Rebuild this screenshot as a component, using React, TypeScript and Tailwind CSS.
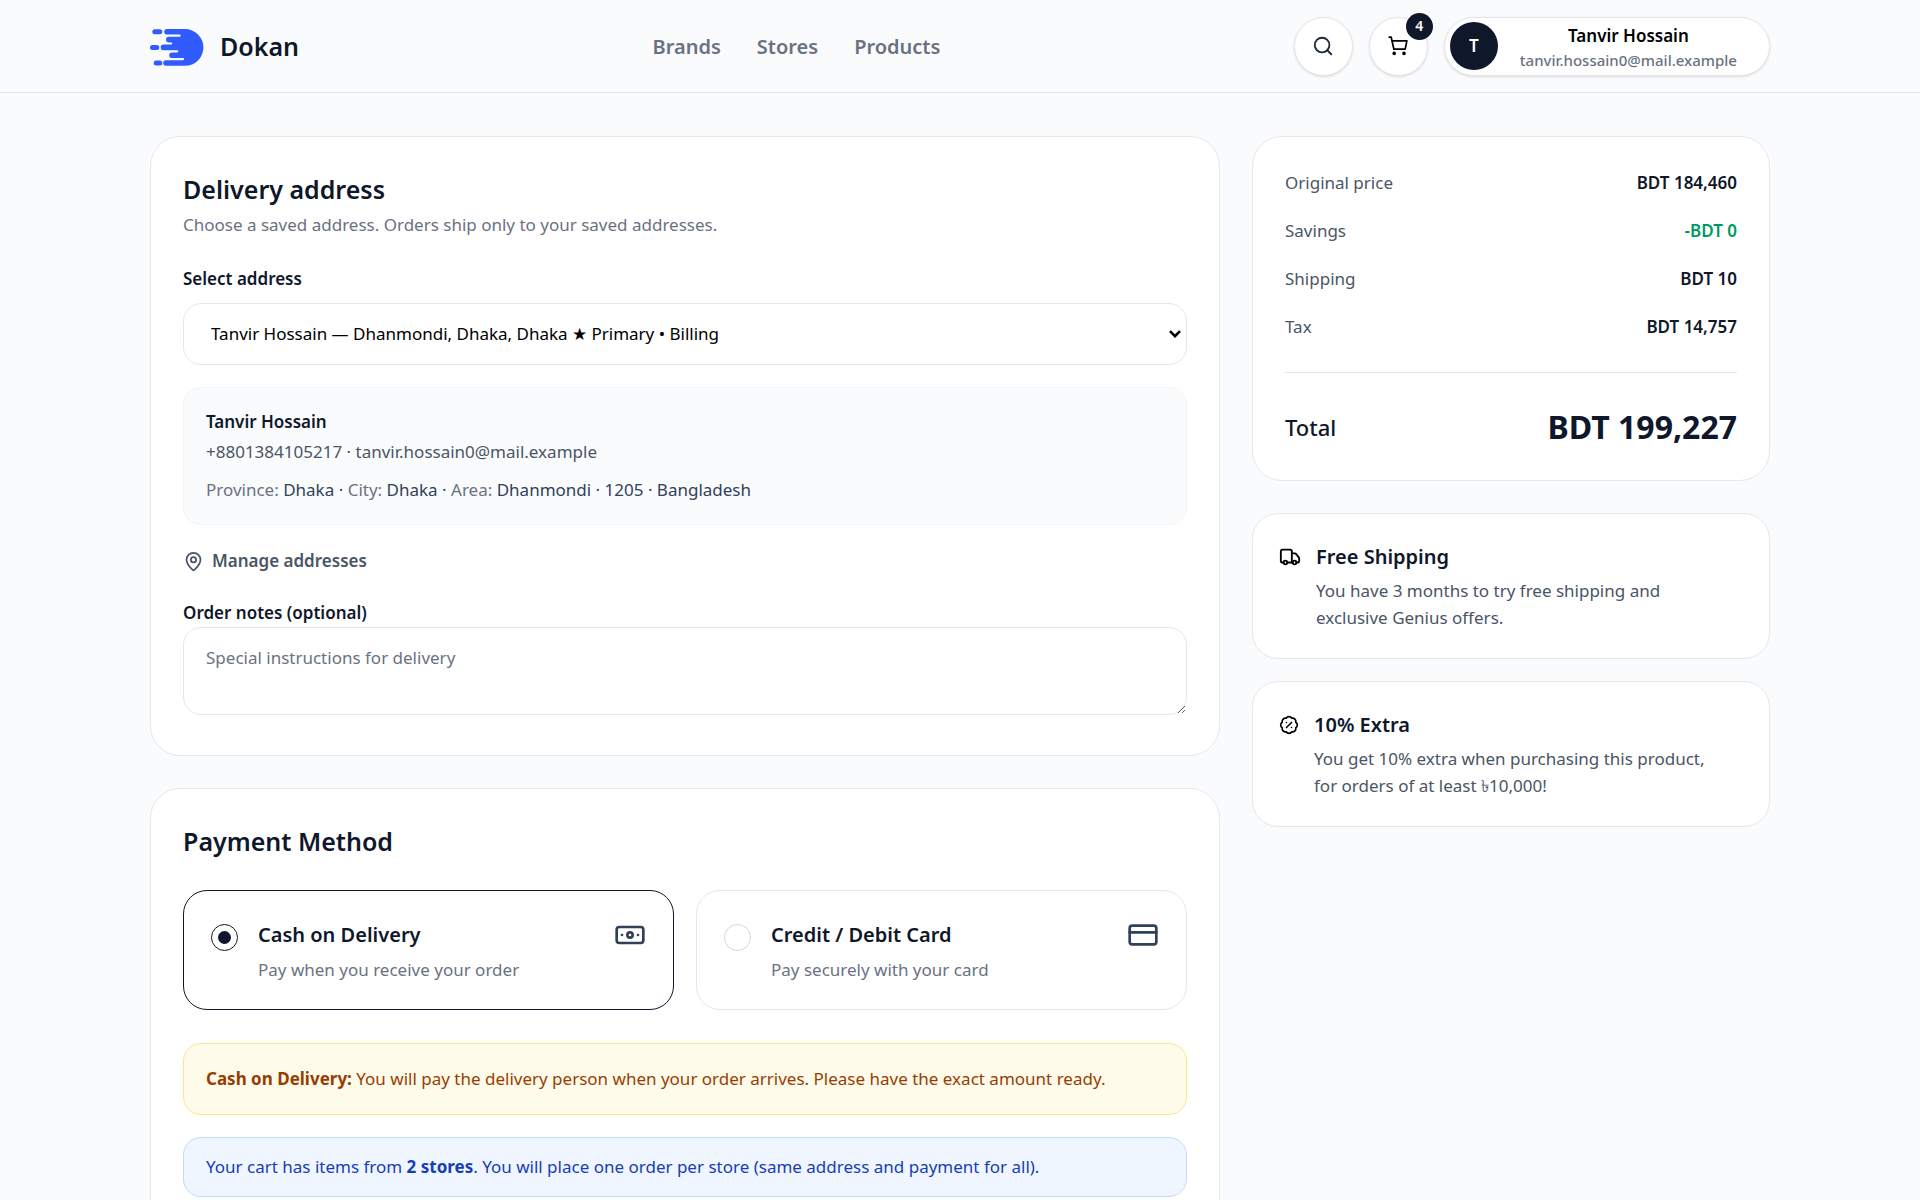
import { useState } from 'react'
import type { ReactNode } from 'react'
import { BadgePercent, Banknote, CreditCard, MapPin, Search, Truck } from 'lucide-react'

interface PaymentOption {
  id: string
  name: string
  desc: string
  icon: ReactNode
}

const NAV = ['Brands', 'Stores', 'Products']

const PAYMENT_OPTIONS: PaymentOption[] = [
  { id: 'cod', name: 'Cash on Delivery', desc: 'Pay when you receive your order', icon: <Banknote size={32} /> },
  { id: 'card', name: 'Credit / Debit Card', desc: 'Pay securely with your card', icon: <CreditCard size={32} /> },
]

const SUMMARY = [
  { label: 'Original price', value: 'BDT 184,460', color: 'text-gray-900' },
  { label: 'Savings', value: '-BDT 0', color: 'text-emerald-600' },
  { label: 'Shipping', value: 'BDT 10', color: 'text-gray-900' },
  { label: 'Tax', value: 'BDT 14,757', color: 'text-gray-900' },
]

function Logo() {
  return (
    <svg width="54" height="37" viewBox="0 0 54 37" fill="none" aria-hidden="true">
      <path
        fill="#2f5bff"
        d="M17 0H35a18.400 18.400 0 0 1 0 36.800H16a2.800 2.800 0 0 1 0-5.600H33a1.100 1.100 0 0 0 0-2.200H22a2.800 2.800 0 0 1 0-5.600H27.200a1.100 1.100 0 0 0 0-2.200H13.500a2.800 2.800 0 0 1 0-5.600H21.200a1.100 1.100 0 0 0 0-2.200H18.800a2.800 2.800 0 0 1 0-5.600H29.600a1.100 1.100 0 0 0 0-2.200H17a2.800 2.800 0 0 1 0-5.600z"
      />
      <path stroke="#2f5bff" strokeLinecap="round" strokeWidth="5" d="M4.800 2.800h5M2.500 18.400h4.300M6.200 34h3.600" />
    </svg>
  )
}

function CartIcon() {
  return (
    <svg width="20" height="20" viewBox="0 0 20 20" fill="none" aria-hidden="true">
      <path stroke="currentColor" strokeWidth="1.700" strokeLinecap="round" strokeLinejoin="round" d="M1.200 1.200h2L5.900 13.200H17.200L18.900 4.800H4" />
      <circle cx="6.200" cy="17.400" r="1.800" fill="currentColor" />
      <circle cx="16" cy="17.400" r="1.800" fill="currentColor" />
    </svg>
  )
}

function Header() {
  return (
    <header className="border-b border-gray-200 px-6">
      <div className="mx-auto flex h-[92px] max-w-[1620px] items-center justify-between">
        <a href="#" className="flex items-center gap-4 pt-0.5 text-[25px] font-semibold text-slate-900">
          <Logo />
          Dokan
        </a>
        <nav className="flex items-center gap-9 pt-0.5 text-[20px] font-semibold text-gray-500">
          {NAV.map((item) => (
            <a key={item} href="#">{item}</a>
          ))}
        </nav>
        <div className="flex items-center gap-4">
          <button aria-label="Search" className="flex size-[59px] items-center justify-center rounded-full border border-gray-200 bg-white text-slate-800 shadow-sm">
            <Search size={22} strokeWidth={2} />
          </button>
          <button aria-label="Cart" className="relative flex size-[59px] items-center justify-center rounded-full border border-gray-200 bg-white text-black shadow-sm">
            <CartIcon />
            <span className="absolute -top-[5px] -right-[6px] flex size-[27px] items-center justify-center rounded-full bg-slate-900 text-sm font-semibold text-white">
              4
            </span>
          </button>
          <button className="flex h-[59px] items-center gap-[22px] rounded-full border border-gray-200 bg-white pr-8 pl-[5px] shadow-sm">
            <span className="flex size-12 items-center justify-center rounded-full bg-slate-900 text-[17px] font-semibold text-white">T</span>
            <span className="flex flex-col items-center pt-1">
              <span className="text-[17px] leading-6 font-semibold text-black">Tanvir Hossain</span>
              <span className="text-[15px] leading-6 font-medium text-gray-500">tanvir.hossain0@mail.example</span>
            </span>
          </button>
        </div>
      </div>
    </header>
  )
}

function DeliveryAddress() {
  return (
    <section className="rounded-[30px] border border-gray-200 bg-white px-8 pt-8 pb-10">
      <h2 className="text-[25px] leading-10 font-semibold text-slate-900">Delivery address</h2>
      <p className="text-[17px] leading-8 text-gray-500">Choose a saved address. Orders ship only to your saved addresses.</p>

      <label htmlFor="address" className="mt-6 block text-[17px] leading-7 font-semibold text-slate-900">Select address</label>
      <div className="relative mt-[10px]">
        <select id="address" className="block h-[62px] w-full appearance-none rounded-[18px] border border-gray-200 bg-white px-[27px] text-[17px] text-black">
          <option>Tanvir Hossain — Dhanmondi, Dhaka, Dhaka ★ Primary • Billing</option>
        </select>
        <svg className="pointer-events-none absolute inset-y-0 right-[6px] my-auto" width="12" height="8" viewBox="0 0 12 8" fill="none" aria-hidden="true">
          <path d="M1 1.200L6 6.200L11 1.200" stroke="black" strokeWidth="2.600" />
        </svg>
      </div>

      <div className="mt-[22px] rounded-[18px] border border-gray-100 bg-[#fafbfd] px-[22px] py-5 text-[17px] text-gray-600">
        <p className="leading-7 font-semibold text-slate-900">Tanvir Hossain</p>
        <p className="leading-8">+8801384105217 · tanvir.hossain0@mail.example</p>
        <p className="mt-2 leading-7 text-slate-700">
          <span className="text-gray-500">Province:</span> Dhaka · <span className="text-gray-500">City:</span> Dhaka ·{' '}
          <span className="text-gray-500">Area:</span> Dhanmondi · 1205 · Bangladesh
        </p>
      </div>

      <a href="#" className="mt-[22px] flex items-center gap-2 text-[17px] leading-7 font-semibold text-gray-600">
        <MapPin size={21} />
        Manage addresses
      </a>

      <label htmlFor="notes" className="mt-6 block text-[17px] leading-7 font-semibold text-slate-900">Order notes (optional)</label>
      <textarea
        id="notes"
        placeholder="Special instructions for delivery"
        className="block h-[88px] w-full rounded-[18px] border border-gray-200 bg-white px-[22px] py-4 text-[17px] leading-7 placeholder:text-gray-500"
      />
    </section>
  )
}

function PaymentMethod() {
  const [method, setMethod] = useState('cod')

  return (
    <section className="rounded-[30px] border border-gray-200 bg-white p-8">
      <h2 className="text-[25px] leading-10 font-semibold text-slate-900">Payment Method</h2>

      <div className="mt-[29px] grid grid-cols-2 gap-[22px]">
        {PAYMENT_OPTIONS.map(({ id, name, desc, icon }) => (
          <label
            key={id}
            className="flex h-[120px] items-start rounded-3xl border border-gray-200 px-[27px] pt-7 text-slate-700 has-checked:border-slate-900"
          >
            <input
              type="radio"
              name="payment"
              checked={method === id}
              onChange={() => setMethod(id)}
              className="mt-[5px] size-[27px] shrink-0 appearance-none rounded-full border border-gray-300 bg-white bg-clip-content p-[6px] checked:border-slate-900 checked:bg-slate-900"
            />
            <span className="ml-5 flex-1">
              <span className="block text-[20px] leading-8 font-semibold text-slate-900">{name}</span>
              <span className="mt-[3px] block text-[17px] leading-8 text-gray-500">{desc}</span>
            </span>
            {icon}
          </label>
        ))}
      </div>

      <p className="mt-[33px] rounded-[18px] border border-amber-200 bg-amber-50 px-[22px] py-[21px] text-[17px] leading-7 text-amber-800">
        <strong>Cash on Delivery:</strong> You will pay the delivery person when your order arrives. Please have the exact amount ready.
      </p>
      <p className="mt-[22px] rounded-[18px] border border-blue-200 bg-blue-50 px-[22px] py-[15px] text-[17px] leading-7 text-blue-800">
        Your cart has items from <strong>2 stores</strong>. You will place one order per store (same address and payment for all).
      </p>
    </section>
  )
}

function OrderSummary() {
  return (
    <section className="rounded-[30px] border border-gray-200 bg-white px-8 pt-8 pb-[31px] text-[17px]">
      <dl className="flex flex-col gap-5">
        {SUMMARY.map((row) => (
          <div key={row.label} className="flex justify-between leading-7">
            <dt className="text-gray-600">{row.label}</dt>
            <dd className={`font-semibold ${row.color}`}>{row.value}</dd>
          </div>
        ))}
      </dl>
      <div className="mt-[31px] flex items-center justify-between border-t border-gray-200 pt-8 text-slate-900">
        <span className="text-[22px] font-medium">Total</span>
        <span className="text-[32px] leading-[44px] font-bold">BDT 199,227</span>
      </div>
    </section>
  )
}

function PerkCard({ icon, title, children }: { icon: ReactNode; title: string; children: ReactNode }) {
  return (
    <section className="flex items-start gap-[15px] rounded-[26px] border border-gray-200 bg-white px-[26px] py-[27px] text-black">
      <span className="flex h-8 shrink-0 items-center">{icon}</span>
      <div className="max-w-[410px]">
        <h3 className="text-[20px] leading-8 font-semibold text-slate-900">{title}</h3>
        <p className="mt-1 text-[17px] leading-[27px] text-gray-600">{children}</p>
      </div>
    </section>
  )
}

export default function App() {
  return (
    <div className="min-h-screen bg-[#fafbfd] pb-10 font-['Noto_Sans',sans-serif]">
      <Header />
      <main className="mx-auto mt-[43px] grid max-w-[1620px] grid-cols-[minmax(0,1070fr)_minmax(0,518fr)] items-start gap-8">
        <div className="flex flex-col gap-8">
          <DeliveryAddress />
          <PaymentMethod />
        </div>
        <aside className="flex flex-col">
          <OrderSummary />
          <div className="mt-8 flex flex-col gap-[22px]">
            <PerkCard icon={<Truck size={22} />} title="Free Shipping">
              You have 3 months to try free shipping and exclusive Genius offers.
            </PerkCard>
            <PerkCard icon={<BadgePercent size={20} />} title="10% Extra">
              You get 10% extra when purchasing this product, for orders of at least ৳10,000!
            </PerkCard>
          </div>
        </aside>
      </main>
    </div>
  )
}
